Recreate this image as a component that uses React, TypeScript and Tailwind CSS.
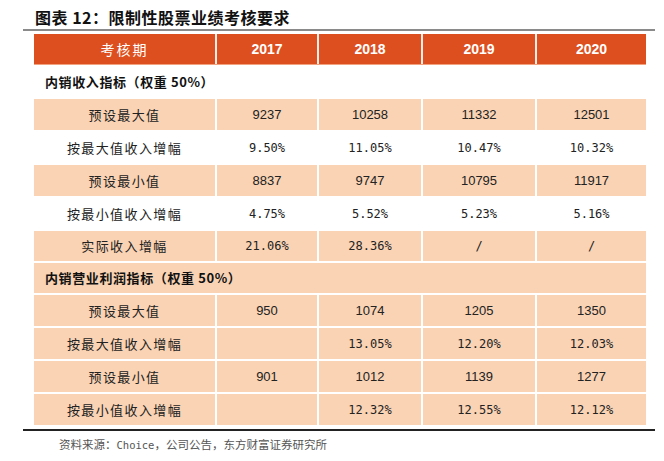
const cjk = "font-['Noto_Sans_CJK_SC',sans-serif]";
const num = "font-['Liberation_Sans','Noto_Sans_CJK_SC',sans-serif]";
const mono = "font-['DejaVu_Sans_Mono','Noto_Sans_CJK_SC',monospace]";

type Row = { label: string; cells: string[]; peach: boolean; h: string };

const years = ['2017', '2018', '2019', '2020'];
const widths = ['w-[183px]', 'w-[102px]', 'w-[104px]', 'w-[114px]', 'w-[109px]'];

const sec1: Row[] = [
  { label: '预设最大值', cells: ['9237', '10258', '11332', '12501'], peach: true, h: 'h-[33px]' },
  { label: '按最大值收入增幅', cells: ['9.50%', '11.05%', '10.47%', '10.32%'], peach: false, h: 'h-[33px]' },
  { label: '预设最小值', cells: ['8837', '9747', '10795', '11917'], peach: true, h: 'h-[33px]' },
  { label: '按最小值收入增幅', cells: ['4.75%', '5.52%', '5.23%', '5.16%'], peach: false, h: 'h-[33px]' },
  { label: '实际收入增幅', cells: ['21.06%', '28.36%', '/', '/'], peach: true, h: 'h-[32px]' },
];

const sec2: Row[] = [
  { label: '预设最大值', cells: ['950', '1074', '1205', '1350'], peach: true, h: 'h-[33px]' },
  { label: '按最大值收入增幅', cells: ['', '13.05%', '12.20%', '12.03%'], peach: true, h: 'h-[33px]' },
  { label: '预设最小值', cells: ['901', '1012', '1139', '1277'], peach: true, h: 'h-[33px]' },
  { label: '按最小值收入增幅', cells: ['', '12.32%', '12.55%', '12.12%'], peach: true, h: 'h-[33px]' },
];

function DataRow({ row }: { row: Row }) {
  const bg = row.peach ? 'bg-[#f9d3b4]' : 'bg-white';
  return (
    <div className={`flex ${row.h} ${bg} border-b-2 border-white`}>
      <div className={`${widths[0]} flex items-center justify-center border-r-2 border-white ${cjk} text-[13px] tracking-[1.4px] text-[#222]`}>
        {row.label}
      </div>
      {row.cells.map((c, i) => {
        const isNum = /^\d+$/.test(c);
        return (
          <div
            key={i}
            className={`${widths[i + 1]} flex items-center justify-center ${i < 3 ? 'border-r-2 border-white' : ''} ${isNum ? `${num} text-[13px]` : `${mono} text-[12px]`} text-[#222]`}
          >
            {c}
          </div>
        );
      })}
    </div>
  );
}

export default function App() {
  return (
    <div className="w-[664px] h-[461px] bg-white relative overflow-hidden">
      <div className={`pl-[35px] pt-[5px] h-[29px] ${cjk} text-[16px] font-bold text-[#111] tracking-[0.5px]`}>
        图表 12：限制性股票业绩考核要求
      </div>
      <div className="ml-[23px] w-[632px] h-[2px] bg-[#8a8a8a]" />
      <div className="ml-[34px] w-[612px] mt-[3px]">
        <div className="flex h-[31px] bg-[#dd4f1f] border-b border-[#f3a27f]">
          <div className={`${widths[0]} flex items-center justify-center border-r-2 border-white/90 ${cjk} text-[14px] tracking-[2px] text-white`}>
            考核期
          </div>
          {years.map((y, i) => (
            <div
              key={y}
              className={`${widths[i + 1]} flex items-center justify-center ${i < 3 ? 'border-r-2 border-white/90' : ''} ${num} text-[14px] font-bold text-white`}
            >
              {y}
            </div>
          ))}
        </div>
        <div className={`h-[34px] flex items-center pl-[11px] bg-white ${cjk} text-[13px] font-bold tracking-[0.6px] text-[#111]`}>
          内销收入指标（权重 50%）
        </div>
        {sec1.map((r, i) => (
          <DataRow key={i} row={r} />
        ))}
        <div className={`h-[32px] flex items-center pl-[11px] bg-[#f9d3b4] border-b-2 border-white ${cjk} text-[13px] font-bold tracking-[0.6px] text-[#111]`}>
          内销营业利润指标（权重 50%）
        </div>
        {sec2.map((r, i) => (
          <DataRow key={i} row={r} />
        ))}
      </div>
      <div className="ml-[23px] w-[632px] h-[2px] bg-[#222] mt-[2px]" />
      <div className={`pl-[59px] pt-[5px] ${cjk} text-[11.5px] text-[#555]`}>
        资料来源：<span className={`${mono} text-[10.5px]`}>Choice</span>，公司公告，东方财富证券研究所
      </div>
    </div>
  );
}
